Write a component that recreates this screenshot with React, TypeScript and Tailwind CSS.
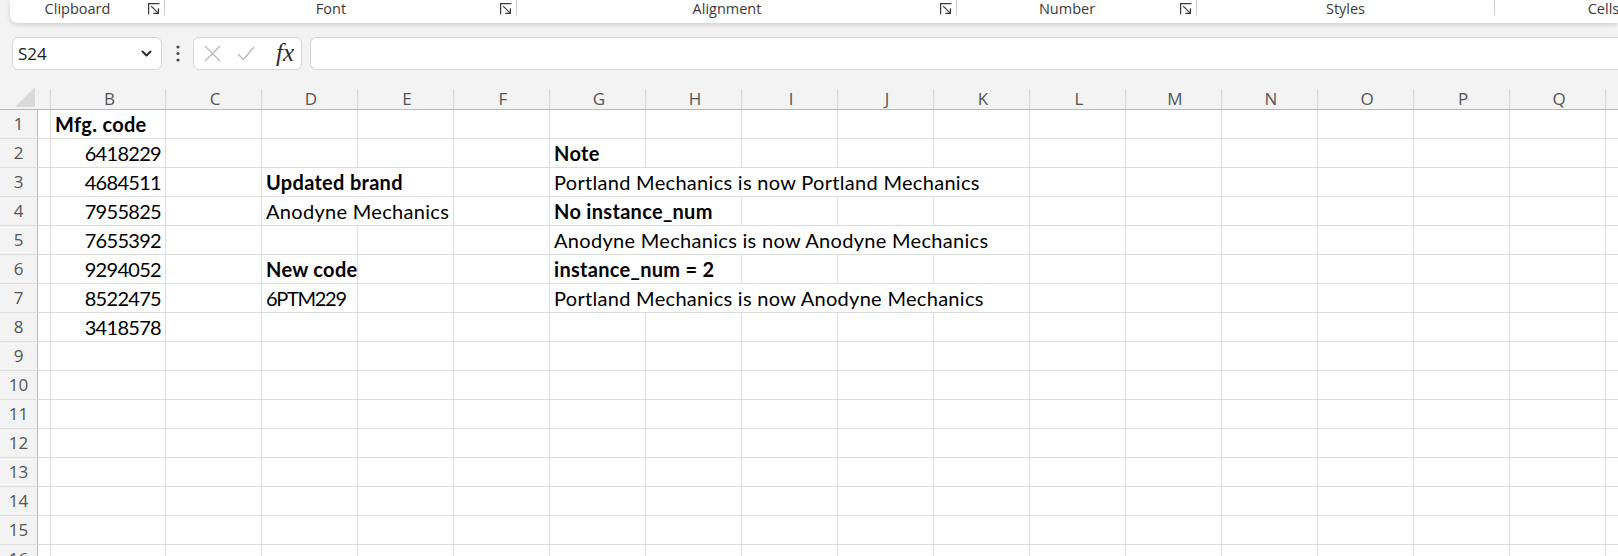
import clsx from 'clsx';

type Cell = { text: string; bold?: boolean; right?: boolean; span?: number; tight?: boolean; tighter?: boolean };

const COLS = ['A', 'B', 'C', 'D', 'E', 'F', 'G', 'H', 'I', 'J', 'K', 'L', 'M', 'N', 'O', 'P', 'Q', 'R'];

const ROWS = Array.from({ length: 16 }, (_, i) => i + 1);

const num = (text: string): Cell => ({ text, right: true, tight: true });

const DATA: Record<number, Record<string, Cell>> = {
  1: { B: { text: 'Mfg. code', bold: true } },
  2: { B: num('6418229'), G: { text: 'Note', bold: true } },
  3: {
    B: num('4684511'),
    D: { text: 'Updated brand', bold: true, span: 2 },
    G: { text: 'Portland Mechanics is now Portland Mechanics', span: 5 },
  },
  4: {
    B: num('7955825'),
    D: { text: 'Anodyne Mechanics', span: 2 },
    G: { text: 'No instance_num', bold: true, span: 2 },
  },
  5: {
    B: num('7655392'),
    G: { text: 'Anodyne Mechanics is now Anodyne Mechanics', span: 5 },
  },
  6: {
    B: num('9294052'),
    D: { text: 'New code', bold: true },
    G: { text: 'instance_num = 2', bold: true, span: 2 },
  },
  7: {
    B: num('8522475'),
    D: { text: '6PTM229', tighter: true },
    G: { text: 'Portland Mechanics is now Anodyne Mechanics', span: 5 },
  },
  8: { B: num('3418578') },
};

const GROUPS = [
  { label: 'Clipboard', w: 'w-[155px]', launcher: true },
  { label: 'Font', w: 'w-[352px]', launcher: true },
  { label: 'Alignment', w: 'w-[440px]', launcher: true },
  { label: 'Number', w: 'w-[240px]', launcher: true },
  { label: 'Styles', w: 'w-[298px]', launcher: false },
  { label: 'Cells', w: 'w-[218px]', launcher: false },
];

function colWidth(col: string, span: number) {
  if (col === 'A') return 'w-[13px]';
  if (col === 'B') return 'w-[115px]';
  if (span === 2) return 'w-[192px]';
  if (span === 5) return 'w-[480px]';
  return 'w-[96px]';
}

function Launcher() {
  return (
    <svg width={12} height={12} viewBox="0 0 12 12" fill="none" stroke="#3b3b3b" strokeWidth={1.2}>
      <path d="M0.6 11.4V0.6H11.4" />
      <path d="M3.2 3.2l7.2 7.2" />
      <path d="M10.4 5.2v5.2H5.2" />
    </svg>
  );
}

function Ribbon() {
  return (
    <div className="ml-[10px] h-[23px] shrink-0 bg-white rounded-bl-[8px] shadow-[0_2px_5px_rgba(0,0,0,0.14)] flex text-[14.5px] text-[#3a3a3a]">
      {GROUPS.map((g) => (
        <div key={g.label} className={clsx('shrink-0 flex items-start', g.w)}>
          <div className="flex-1 text-center mt-[1px] leading-[15px]">{g.label}</div>
          {g.launcher && (
            <div className="mt-[3px] ml-[3px] mr-[4px]">
              <Launcher />
            </div>
          )}
          <div className="w-px h-[15px] bg-[#cfcfcf]" />
        </div>
      ))}
    </div>
  );
}

function FormulaBar() {
  return (
    <div className="mt-[14px] h-[33px] shrink-0 flex">
      <div className="ml-[12px] w-[150px] h-full bg-white border border-[#d6d6d6] rounded-[6px] flex items-center justify-between pl-[5px] pr-[9px]">
        <span className="text-[17px] text-[#222]">S24</span>
        <svg width={11} height={7} viewBox="0 0 11 7" fill="none" stroke="#2b2b2b" strokeWidth={2} strokeLinecap="round" strokeLinejoin="round">
          <path d="M1.5 1.5l4 4 4-4" />
        </svg>
      </div>
      <div className="w-[31px] h-full flex items-center justify-center">
        <svg width={4} height={17} viewBox="0 0 4 17" fill="#4a4a4a">
          <circle cx={2} cy={2} r={1.6} />
          <circle cx={2} cy={8.5} r={1.6} />
          <circle cx={2} cy={15} r={1.6} />
        </svg>
      </div>
      <div className="w-[109px] h-full bg-white border border-[#d6d6d6] rounded-[6px] flex items-center pl-[10px]">
        <svg width={17} height={17} viewBox="0 0 17 17" fill="none" stroke="#b8b8b8" strokeWidth={1.3}>
          <path d="M1 1l15 15M16 1L1 16" />
        </svg>
        <svg width={18} height={15} viewBox="0 0 18 15" fill="none" stroke="#b8b8b8" strokeWidth={1.3} className="ml-[16px]">
          <path d="M1 8l5.5 5.5L17 1" />
        </svg>
        <span className="ml-[21px] font-['Liberation_Serif',serif] italic text-[25px] leading-none text-[#2e2e2e] -mt-[2px]">fx</span>
      </div>
      <div className="ml-[8px] flex-1 h-full bg-white border border-r-0 border-[#d6d6d6] rounded-l-[6px]" />
    </div>
  );
}

function ColumnHeader() {
  return (
    <div className="mt-[15px] h-[25px] shrink-0 flex border-b border-[#bababa]">
      <div className="w-[38px] shrink-0 h-full flex items-end justify-end pr-[3px] pb-[2px]">
        <svg width={20} height={20} viewBox="0 0 20 20">
          <path d="M20 0V20H0Z" fill="#d9d9d9" />
        </svg>
      </div>
      {COLS.map((col) => (
        <div key={col} className={clsx('shrink-0 h-full pt-[4px]', colWidth(col, 1))}>
          <div className="h-full border-r border-[#d4d4d4] flex items-center justify-center pl-[3px] text-[17px] text-[#555]">
            {col === 'A' || col === 'R' ? '' : col}
          </div>
        </div>
      ))}
    </div>
  );
}

function Row({ n }: { n: number }) {
  const cells = DATA[n] ?? {};
  const out: JSX.Element[] = [];
  let i = 0;
  while (i < COLS.length) {
    const col = COLS[i];
    const cell = cells[col];
    const span = cell?.span ?? 1;
    out.push(
      <div
        key={col}
        className={clsx(
          'shrink-0 h-full border-r border-[#dcdcdc] px-[4px] flex items-center whitespace-nowrap',
          colWidth(col, span),
          cell?.right && 'justify-end',
          cell?.bold && 'font-bold',
          cell?.tight && 'tracking-[-0.7px]',
          cell?.tighter && 'tracking-[-1.3px]',
        )}
      >
        {cell?.text}
      </div>,
    );
    i += span;
  }
  return (
    <div className="h-[29px] shrink-0 flex border-b border-[#dcdcdc]">
      <div className="w-[38px] shrink-0 h-full border-r border-[#bababa] flex items-center justify-center text-[17px] text-[#555]">
        {n}
      </div>
      <div className="flex bg-white font-['Lato',sans-serif] text-[20px] tracking-[0.3px] text-black">{out}</div>
    </div>
  );
}

export default function App() {
  return (
    <div className="w-[1618px] h-[556px] overflow-hidden bg-[#f3f3f3] flex flex-col font-['Open_Sans',sans-serif]">
      <Ribbon />
      <FormulaBar />
      <ColumnHeader />
      {ROWS.map((n) => (
        <Row key={n} n={n} />
      ))}
    </div>
  );
}
